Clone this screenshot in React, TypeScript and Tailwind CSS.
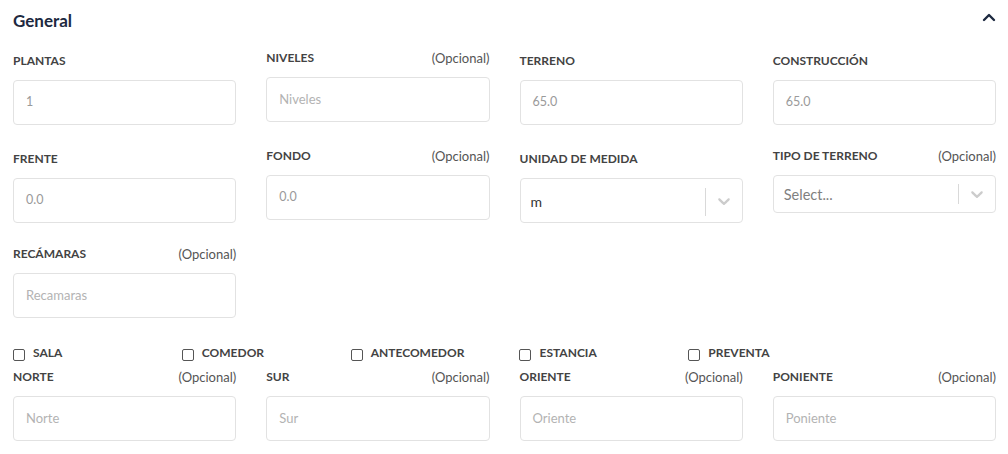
import React from "react";

const font = { fontFamily: "Lato, 'Noto Sans', sans-serif" };

function Chevron() {
  return (
    <svg width="20" height="20" viewBox="0 0 20 20" fill="#cccccc" aria-hidden="true">
      <path d="M4.516 7.548c0.436-0.446 1.043-0.481 1.576 0l3.908 3.747 3.908-3.747c0.533-0.481 1.141-0.446 1.574 0 0.436 0.445 0.408 1.197 0 1.615-0.406 0.418-4.695 4.502-4.695 4.502-0.217 0.223-0.502 0.335-0.787 0.335s-0.57-0.112-0.789-0.335c0 0-4.287-4.084-4.695-4.502s-0.436-1.17 0-1.615z" />
    </svg>
  );
}

type FieldProps = {
  label: string;
  optional?: boolean;
  placeholder?: string;
  value?: string;
};

function Label({ label, optional }: { label: string; optional?: boolean }) {
  return (
    <div className={`flex items-center justify-between h-[16px] ${optional ? "" : "mt-[3px]"}`}>
      <span className="text-[12px] font-bold uppercase text-[#434343] leading-[16px]">{label}</span>
      {optional && <span className="text-[13px] text-[#555555] leading-[16px]">(Opcional)</span>}
    </div>
  );
}

function Field({ label, optional, placeholder, value }: FieldProps) {
  return (
    <div className="flex flex-col">
      <Label label={label} optional={optional} />
      <div className="mt-[11px] h-[45px] border border-[#e2e2e2] rounded-[4px] flex items-center px-[12px]">
        {value ? (
          <span className="text-[12.5px] text-[#9a9a9a]">{value}</span>
        ) : (
          <span className="text-[13px] text-[#b3b3b3]">{placeholder}</span>
        )}
      </div>
    </div>
  );
}

function SelectField({
  label,
  optional,
  value,
  placeholder,
  tall,
}: {
  label: string;
  optional?: boolean;
  value?: string;
  placeholder?: string;
  tall?: boolean;
}) {
  return (
    <div className="flex flex-col">
      <Label label={label} optional={optional} />
      <div
        className={`mt-[11px] ${tall ? "h-[45px]" : "h-[38px]"} border border-[#e2e2e2] rounded-[4px] flex items-center`}
      >
        <div className="flex-1 pl-[10px]">
          {value ? (
            <span className="text-[14px] text-[#333333]">{value}</span>
          ) : (
            <span className="text-[14.5px] text-[#808080]">{placeholder}</span>
          )}
        </div>
        <span className={`w-px ${tall ? "h-[28px] mt-[2px]" : "h-[20px]"} bg-[#d9d9d9]`} />
        <div className="px-[8px] flex items-center">
          <Chevron />
        </div>
      </div>
    </div>
  );
}

function Check({ label }: { label: string }) {
  return (
    <label className="flex items-center gap-[8px] h-[16px]">
      <span className="w-[12px] h-[12px] border border-[#555555] rounded-[2px] mt-[4px] shrink-0" />
      <span className="text-[12px] font-bold uppercase text-[#434343] leading-[16px]">{label}</span>
    </label>
  );
}

export default function App() {
  return (
    <div className="w-[1008px] h-[454px] bg-white overflow-hidden" style={font}>
      <div className="pl-[13px] pr-[12px] pt-[11px]">
        <div className="flex items-center justify-between h-[20px]">
          <span className="text-[17px] font-bold text-[#1d2940]">General</span>
          <svg width="14" height="10" viewBox="0 0 14 10" className="-mt-[8px]" aria-hidden="true">
            <polyline points="2,8 7,3 12,8" fill="none" stroke="#1d2940" strokeWidth="2.4" strokeLinecap="round" strokeLinejoin="round" />
          </svg>
        </div>

        <div className="mt-[19px] grid grid-cols-4 gap-x-[30px] gap-y-[23px] items-start">
          <Field label="Plantas" value="1" />
          <Field label="Niveles" optional placeholder="Niveles" />
          <Field label="Terreno" value="65.0" />
          <Field label="Construcción" value="65.0" />

          <Field label="Frente" value="0.0" />
          <Field label="Fondo" optional value="0.0" />
          <SelectField label="Unidad de medida" value="m" tall />
          <SelectField label="Tipo de terreno" optional placeholder="Select..." />

          <Field label="Recámaras" optional placeholder="Recamaras" />
        </div>

        <div className="mt-[27px] grid grid-cols-6 gap-x-[30px]">
          <Check label="Sala" />
          <Check label="Comedor" />
          <Check label="Antecomedor" />
          <Check label="Estancia" />
          <Check label="Preventa" />
        </div>

        <div className="mt-[8px] grid grid-cols-4 gap-x-[30px]">
          <Field label="Norte" optional placeholder="Norte" />
          <Field label="Sur" optional placeholder="Sur" />
          <Field label="Oriente" optional placeholder="Oriente" />
          <Field label="Poniente" optional placeholder="Poniente" />
        </div>
      </div>
    </div>
  );
}
